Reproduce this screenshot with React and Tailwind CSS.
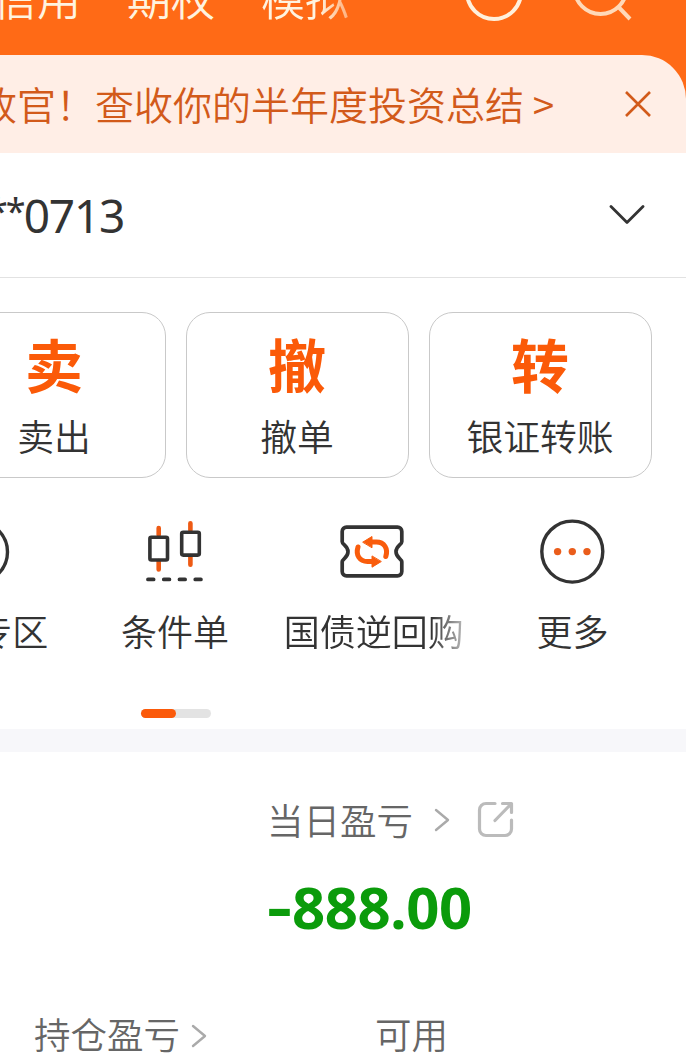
const TABS = ['信用', '期权', '模拟']

const TRADE_ACTIONS = [
  { mark: '卖', label: '卖出' },
  { mark: '撤', label: '撤单' },
  { mark: '转', label: '银证转账' },
]

const SHORTCUTS = [
  { label: '期权专区', Icon: ZoneIcon },
  { label: '条件单', Icon: CandleIcon },
  { label: '国债逆回购', Icon: TicketIcon, faded: true },
  { label: '更多', Icon: MoreIcon },
]

function ZoneIcon() {
  return (
    <svg className="ml-[2px] size-[70px]" viewBox="0 0 70 70" fill="none" stroke="#333" strokeWidth="3.4">
      <circle cx="35" cy="35" r="30.5" />
    </svg>
  )
}

function CandleIcon() {
  return (
    <svg className="size-[70px]" viewBox="0 0 70 70" fill="none" strokeLinecap="round" strokeLinejoin="round">
      <path d="M18.7 11v7M18.7 44v8.5M50.4 6.2v7M50.4 39v8.7" stroke="#ee5a14" strokeWidth="4.6" />
      <rect x="9.9" y="20.2" width="17.6" height="22.8" rx="1.5" stroke="#333" strokeWidth="3.6" />
      <rect x="41.7" y="15.3" width="17.6" height="22.8" rx="1.5" stroke="#333" strokeWidth="3.6" />
      <path d="M8 62.4h5.6M23.8 62.4h5.6M39.5 62.4h5.6M55.3 62.4h5.6" stroke="#333" strokeWidth="3.8" />
    </svg>
  )
}

function TicketIcon() {
  return (
    <svg className="-ml-[3px] size-[70px]" viewBox="0 0 70 70" fill="none" strokeLinecap="round" strokeLinejoin="round">
      <path
        d="M9.5 10.1h51a4.3 4.3 0 0 1 4.3 4.3v10.3c0 3-5.8 4-5.8 10s5.8 7 5.8 10v9.9a4.3 4.3 0 0 1-4.3 4.3h-51a4.3 4.3 0 0 1-4.3-4.3V44.7c0-3 5.8-4 5.8-10s-5.8-7-5.8-10V14.4a4.3 4.3 0 0 1 4.3-4.3Z"
        stroke="#333"
        strokeWidth="3.7"
      />
      <path d="M21 30c-2.5 8 1.5 14.5 9.5 14.5h5M48.8 39.5c2.5-8-1.5-14.5-9.5-14.5h-5" stroke="#f95c0c" strokeWidth="5" />
      <path d="M35 39.3v10.9l9-5.5ZM35 30.4V19.5l-9 5.5Z" fill="#f95c0c" stroke="#f95c0c" strokeWidth="1" />
    </svg>
  )
}

function MoreIcon() {
  return (
    <svg className="size-[70px]" viewBox="0 0 70 70" fill="none">
      <circle cx="35.3" cy="34.6" r="30.5" stroke="#333" strokeWidth="3.4" />
      <g fill="#ea5d1b">
        <circle cx="20.6" cy="34.6" r="3.7" />
        <circle cx="35.3" cy="34.6" r="3.7" />
        <circle cx="50" cy="34.6" r="3.7" />
      </g>
    </svg>
  )
}

function ChevronRight({ className }) {
  return (
    <svg className={className} viewBox="0 0 16 24" fill="none" stroke="#aaa" strokeWidth="2.4" strokeLinecap="round" strokeLinejoin="round">
      <path d="M2 2l12 10L2 22" />
    </svg>
  )
}

function TopBar() {
  return (
    <header className="flex h-[55px] items-start justify-between overflow-hidden">
      <nav className="-ml-[7px] -mt-[31px] flex gap-[46px] text-[44px] leading-[56px] text-[#fff3df]">
        {TABS.map(tab => (
          <span
            key={tab}
            className={tab === '模拟' ? '[mask-image:linear-gradient(to_right,#000_65%,rgba(0,0,0,0.5)_100%)]' : ''}
          >
            {tab}
          </span>
        ))}
      </nav>
      <div className="-mt-[40px] mr-[53px] flex gap-[48px]">
        <svg className="size-[62px]" viewBox="0 0 62 62" fill="none" stroke="#fff0dc" strokeWidth="4">
          <circle cx="31" cy="32" r="27" />
        </svg>
        <svg className="h-[62px] w-[60px]" viewBox="0 0 60 62" fill="none" stroke="#ffd9b8" strokeWidth="4">
          <circle cx="27.5" cy="28" r="26" />
          <path d="M45.5 47l11.5 12" />
        </svg>
      </div>
    </header>
  )
}

function Notice() {
  return (
    <div className="flex h-[98px] items-center justify-between rounded-tr-[44px] bg-[#ffeee6] pr-[35px] text-[#d25a1a]">
      <p className="-ml-[22px] -mt-[3px] whitespace-nowrap text-[39px] leading-[56px]">
        收官！查收你的半年度投资总结 &gt;
      </p>
      <svg className="size-[26px]" viewBox="0 0 26 26" fill="none" stroke="currentColor" strokeWidth="2.6">
        <path d="M1 1l24 24M25 1L1 25" />
      </svg>
    </div>
  )
}

function AccountRow() {
  return (
    <div className="flex h-[125px] items-center justify-between border-b border-[#e2e2e2] bg-white pr-[41px]">
      <span className="flex items-center font-['Noto_Sans'] font-normal leading-[60px] text-[#333]">
        <span className="-ml-[12px] -mt-[8px] text-[36px] tracking-[-2px]">**</span>
        <span className="text-[46px] tracking-[-1.2px]">0713</span>
      </span>
      <svg className="h-[20px] w-[36px]" viewBox="0 0 36 20" fill="none" stroke="#333" strokeWidth="2.8" strokeLinecap="round" strokeLinejoin="round">
        <path d="M2 1.5l16 16L34 1.5" />
      </svg>
    </div>
  )
}

function TradeActions() {
  return (
    <div className="-ml-[57px] flex gap-[20px] pt-[34px]">
      {TRADE_ACTIONS.map(({ mark, label }) => (
        <button
          key={mark}
          className="flex h-[166px] w-[223px] shrink-0 flex-col items-center rounded-[24px] border border-[#c9c9c9] pr-[1px] pt-[15px]"
        >
          <span className="text-[58px] font-bold leading-[70px] text-[#fb5a08]">{mark}</span>
          <span className="mt-[3px] whitespace-nowrap text-[36.8px] leading-[68px] text-[#333]">{label}</span>
        </button>
      ))}
    </div>
  )
}

function Shortcuts() {
  return (
    <div className="-ml-[123px] mt-[39px] flex">
      {SHORTCUTS.map(({ label, Icon, faded }) => (
        <div key={label} className="flex w-[198.7px] shrink-0 flex-col items-center">
          <Icon />
          <span
            className={`mt-[19px] w-[180px] whitespace-nowrap text-center text-[36px] leading-[48px] text-[#333] ${
              faded ? '[mask-image:linear-gradient(to_right,#000_82%,rgba(0,0,0,0.4)_98%)]' : ''
            }`}
          >
            {label}
          </span>
        </div>
      ))}
    </div>
  )
}

function Profit() {
  return (
    <section className="bg-white pl-[267px] pt-[40px] text-[#666]">
      <div className="flex h-[56px] items-center">
        <span className="text-[36.5px] leading-[56px]">当日盈亏</span>
        <ChevronRight className="ml-[21px] h-[24px] w-[16px]" />
        <svg className="ml-[27px] size-[38px]" viewBox="0 0 38 38" fill="none" stroke="#bbb" strokeWidth="3.2" strokeLinecap="round" strokeLinejoin="round">
          <path d="M18 2.5H9A6.5 6.5 0 0 0 2.5 9V28A6.5 6.5 0 0 0 9 34.5h19a6.5 6.5 0 0 0 6.5-6.5V19" />
          <path d="M18 19.5L34 3M25.5 2.5h9v9" />
        </svg>
      </div>
      <p className="mt-[19px] flex font-['Noto_Sans'] text-[58px] font-bold leading-[80px] tracking-[-0.4px] text-[#0b9b0b]">
        <span className="w-[25px] origin-left -translate-y-[1px] scale-x-[1.35]">-</span>888.00
      </p>
    </section>
  )
}

function Metrics() {
  return (
    <div className="flex pl-[34px] pt-[63px] text-[36.5px] leading-[48px] text-[#666]">
      <div className="flex w-[341px] items-center">
        持仓盈亏
        <ChevronRight className="ml-[11px] mt-[4px] h-[24px] w-[16px]" />
      </div>
      <div>可用</div>
    </div>
  )
}

export default function App() {
  return (
    <div className="h-[1054px] w-[686px] overflow-hidden bg-white font-['Noto_Sans_CJK_SC',sans-serif] font-[350]">
      <div className="bg-[#ff6a16]">
        <TopBar />
        <Notice />
      </div>
      <AccountRow />
      <TradeActions />
      <Shortcuts />
      <div className="ml-[141px] mt-[55px] h-[9px] w-[70px] rounded-full bg-[#e3e3e3]">
        <div className="h-full w-1/2 rounded-full bg-[#fb5a0a]" />
      </div>
      <div className="mt-[11px] h-[23px] bg-[#f7f7fa]" />
      <Profit />
      <Metrics />
    </div>
  )
}
